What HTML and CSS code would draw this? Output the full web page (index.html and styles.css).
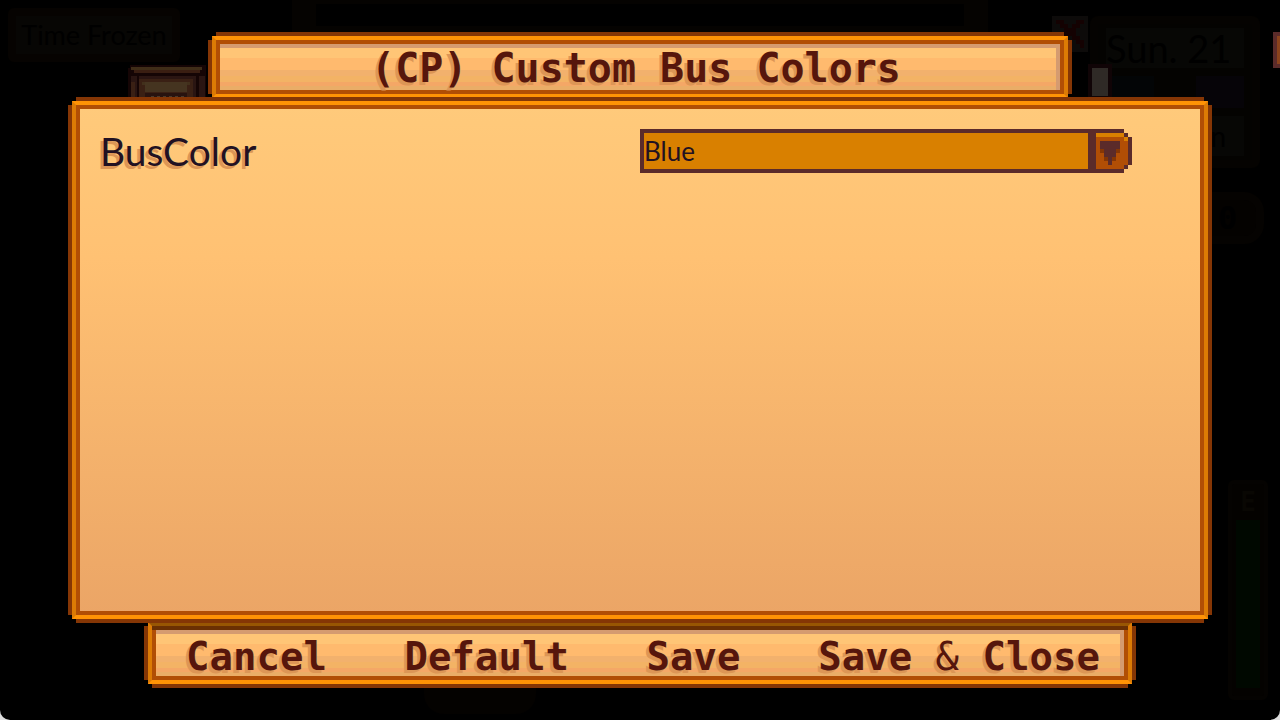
FILE: index.html
```html
<!DOCTYPE html>
<html lang="en">
<head>
  <meta charset="UTF-8">
  <title>(CP) Custom Bus Colors</title>
  <link rel="stylesheet" href="styles.css">
</head>
<body>
  <div class="screen">

    <!-- dimmed game behind the menu -->
    <div class="game">
      <div class="frozen">Time Frozen</div>
      <div class="toolbar"></div>
      <svg class="chest" width="80" height="36" viewBox="0 0 80 36" shape-rendering="crispEdges">
        <path fill="#150505" d="M2 0h76v36H0V3h2z"/>
        <path fill="#3f2d18" d="M3 2h71v3H3z"/>
        <path fill="#3a1e12" d="M6 5h66v3H6z"/>
        <path fill="#2a1512" d="M3 11h6v25H3zM11 11h57v25H11zM71 11h6v25h-6z"/>
        <path fill="#3a2014" d="M11 14h54v22H11zM3 17h4v19H3z"/>
        <path fill="#42301c" d="M14 17h48v3H14z"/>
        <path fill="#453420" d="M17 17h42v10H17z"/>
        <path fill="#28130f" d="M17 28h42v8H17z"/>
        <path stroke="#4a3a2c" stroke-dasharray="3 3" d="M23 31h34"/>
      </svg>
      <div class="clock">
        <div class="date">Sun. 21</div>
        <div class="weather"><span class="sky"></span><span class="season"></span></div>
        <div class="time">n</div>
      </div>
      <svg class="close" width="36" height="36" viewBox="0 0 9 9">
        <path fill="#0d0b0a" d="M0 0h9v9H0z"/>
        <path fill="#140202" d="M1 1h2v1h1v1h1V2h1V1h2v1H7v1H6v2h1v1h1v2H7V7H6V6H5V5H4v1H3v1H1V6h1V5h1V3H2V2H1z"/>
      </svg>
      <div class="pole"></div>
      <div class="money">0</div>
      <div class="energy"><span>E</span><div class="bar"></div></div>
      <div class="shade"></div>
      <div class="edge"></div>
    </div>

    <form class="menu">
      <h1 class="frame title">(CP) Custom Bus Colors</h1>

      <div class="frame options">
        <div class="option">
          <label for="bus-color">BusColor</label>
          <div class="dropdown">
            <select id="bus-color">
              <option>Blue</option>
            </select>
            <svg width="40" height="44" viewBox="0 0 10 11" shape-rendering="crispEdges">
              <path fill="#5b2b2a" d="M0 0h8v1h1v1h1v7H9v1H8v1H0z"/>
              <path fill="#b14e05" d="M1 1h7v1h1v7H8v1H1z"/>
              <path fill="#d98000" d="M1 1h7v1H1zM8 2h1v1H8z"/>
              <path fill="#853605" d="M2 5h5v1H2zM3 7h3v1H3z"/>
              <path fill="#5b2b2a" d="M2 3h5v2H6v2H5v2H4V7H3V5H2z"/>
            </svg>
          </div>
        </div>
      </div>

      <div class="frame actions">
        <button type="button">Cancel</button>
        <button type="button">Default</button>
        <button type="button">Save</button>
        <button type="button">Save <span class="amp">&amp;</span> Close</button>
      </div>
    </form>
  </div>
</body>
</html>
```
FILE: styles.css
```css
html {
  background: #ddd;
}

body {
  margin: 0;
  font-family: Lato, sans-serif;
  color: #221122;
}

.screen {
  position: relative;
  min-height: 100vh;
  background: #000;
  border-radius: 0 0 10px 10px;
  overflow: hidden;
}

/* menu */
.menu {
  position: relative;
  display: flex;
  flex-direction: column;
  gap: 3px;
  min-height: 100vh;
  padding: 36px 72px;
  box-sizing: border-box;
}

/* three-step pixel border with notched corners */
.frame {
  box-sizing: border-box;
  margin: 0;
  border: 4px solid;
  border-color: #ff9305 #dc7b05;
  box-shadow:
    inset 0 0 0 4px #b14e05,
    0 -8px 0 -4px #853605,
    0 8px 0 -4px #853605,
    -8px 0 0 -4px #853605,
    8px 0 0 -4px #853605;
}

.title,
.actions {
  height: 62px;
  color: #56160c;
  background: linear-gradient(
    #ffc576 18px,
    #ffba6e 18px, #ffba6e 30px,
    #f2b16d 30px, #f2b16d 36px,
    #f3b365 36px, #f3b365 42px,
    #f4a766 42px, #f4a766 46px,
    #eaad67 46px);
}

.title {
  margin: 0 140px;
  padding-right: 8px;
  font: bold 40px/56px "DejaVu Sans Mono", monospace;
  text-align: center;
  text-shadow: -3px 3px #dc9656;
  white-space: nowrap;
  box-shadow:
    inset 0 0 0 4px #b14e05,
    inset -4px 4px 0 4px #d59b70,
    0 -8px 0 -4px #853605,
    -8px 0 0 -4px #853605,
    8px 0 0 -4px #853605;
}

.options {
  position: relative;
  z-index: 1;
  flex: 1;
  padding: 24px;
  background: linear-gradient(#ffca7b, #ffc173 30%, #eba566);
}

.option {
  display: grid;
  grid-template-columns: 1fr 1fr;
  align-items: center;
}

.option label {
  font-size: 39px;
  line-height: 44px;
  text-shadow: -3px 3px #dc9656;
}

.dropdown {
  display: flex;
  max-width: 492px;
}

.dropdown select {
  flex: 1;
  min-width: 0;
  height: 44px;
  padding: 0;
  border: 4px solid #5b2b2a;
  border-radius: 0;
  background: #d98000;
  color: #221122;
  font: 26px Lato, sans-serif;
  appearance: none;
}

.actions {
  display: flex;
  justify-content: space-between;
  align-items: flex-end;
  margin: 0 76px;
  padding: 0 28px 0 34px;
  border-top-color: #985603;
  box-shadow:
    inset 0 4px #6b3003,
    inset 0 0 0 4px #b14e05,
    inset -4px 4px 0 4px #d59b70,
    0 8px 0 -4px #853605,
    -8px 0 0 -4px #853605,
    8px 0 0 -4px #853605;
}

.actions button {
  padding: 0;
  border: 0;
  background: none;
  color: inherit;
  font: bold 39px/46px "DejaVu Sans Mono", monospace;
  text-shadow: -3px 3px #dc9656;
  white-space: nowrap;
  cursor: pointer;
}

.actions .amp {
  font-weight: normal;
}

/* game hud, almost black under the overlay */
.game > * {
  position: absolute;
  box-sizing: border-box;
}

.frozen {
  left: 8px;
  top: 8px;
  width: 172px;
  height: 54px;
  border: 8px solid #060301;
  border-radius: 6px;
  background: #070604;
  color: #000;
  font-size: 27px;
  line-height: 38px;
  text-align: center;
  white-space: nowrap;
}

.toolbar {
  left: 292px;
  top: -20px;
  width: 696px;
  height: 70px;
  border: 24px solid #050301;
}

.chest {
  left: 128px;
  top: 65px;
}

.clock {
  right: 20px;
  top: 16px;
  width: 170px;
  height: 152px;
  padding: 4px 8px;
  border: 8px solid #050301;
  border-radius: 8px;
  background: #040301;
  color: #000;
}

.date,
.time {
  background: #070705;
  font-size: 38px;
  line-height: 40px;
  white-space: nowrap;
}

.time {
  padding-right: 18px;
  font-size: 28px;
  text-align: right;
}

.weather {
  display: flex;
  justify-content: space-between;
  padding: 8px 0;
}

.weather span {
  width: 48px;
  height: 32px;
  background: #030506;
}

.weather .season {
  background: #060408;
}

.close {
  left: 1052px;
  top: 16px;
}

.pole {
  left: 1088px;
  top: 64px;
  width: 24px;
  height: 36px;
  border: 4px solid #100406;
  border-right-width: 4px;
  background: #2f2a26;
}

.money {
  right: 16px;
  top: 192px;
  width: 70px;
  height: 52px;
  border: 8px solid #050301;
  border-radius: 0 20px 20px 0;
  padding-left: 16px;
  background: #040200;
  color: #000;
  font: bold 32px/36px "DejaVu Sans Mono", monospace;
}

.energy {
  right: 12px;
  bottom: 20px;
  width: 40px;
  height: 220px;
  border: 4px solid #050301;
  border-radius: 6px;
  background: #040200;
  color: #090703;
  font: bold 26px/36px "DejaVu Sans Mono", monospace;
  text-align: center;
}

.energy .bar {
  height: 168px;
  margin: 0 4px;
  background: #000800;
}

.shade {
  left: 424px;
  bottom: 6px;
  width: 112px;
  height: 40px;
  border-radius: 0 0 20px 20px;
  background: #040200;
}

.edge {
  right: 0;
  top: 32px;
  width: 7px;
  height: 36px;
  border: 4px solid #5b2b2a;
  border-right: 0;
  background: #8b431c;
}
```
